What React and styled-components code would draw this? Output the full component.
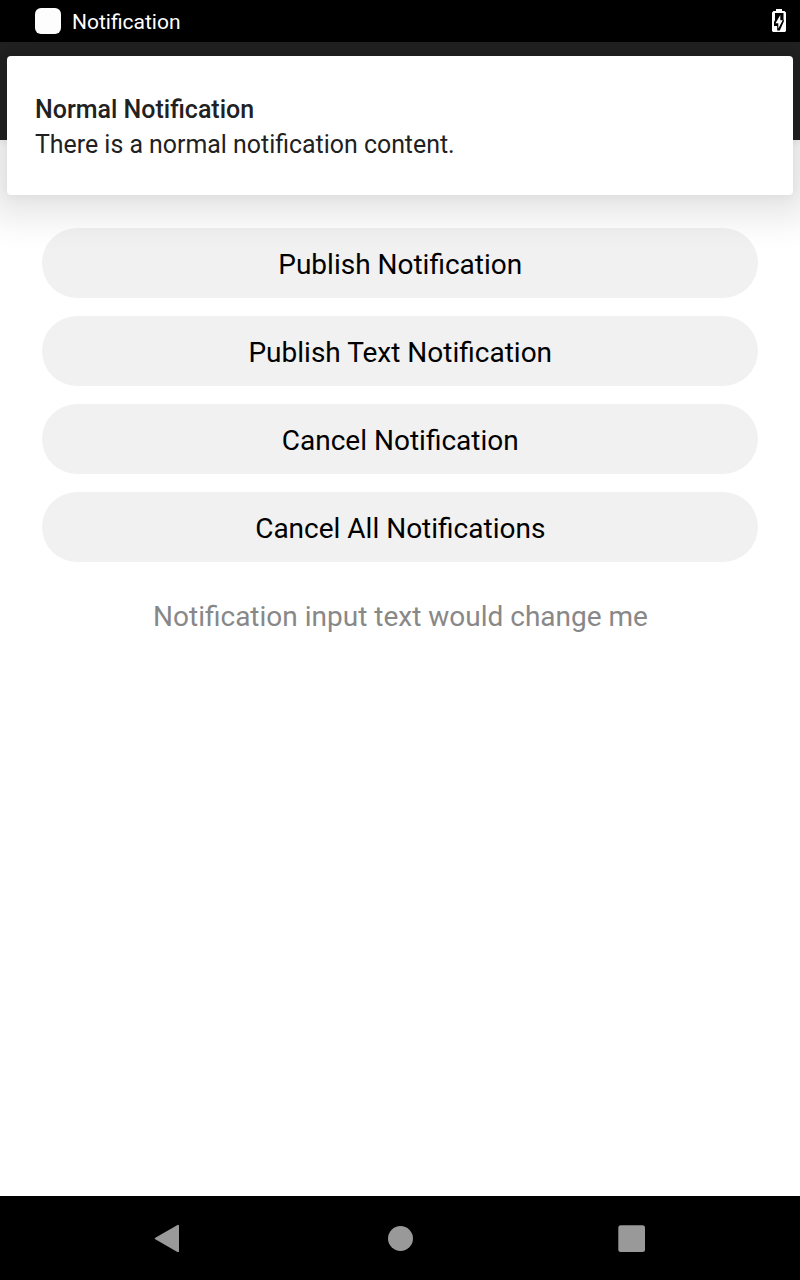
import React from 'react';
import styled, { createGlobalStyle } from 'styled-components';

const Global = createGlobalStyle`
  * { box-sizing: border-box; }
  body { margin: 0; font-family: Roboto, sans-serif; background: #fff; }
`;

const Screen = styled.div`
  position: relative;
  width: 800px;
  height: 1280px;
  display: flex;
  flex-direction: column;
  overflow: hidden;
  background: #fff;
`;

const StatusBar = styled.header`
  position: relative;
  z-index: 2;
  height: 42px;
  flex: none;
  display: flex;
  align-items: center;
  padding: 0 14px 0 35px;
  background: #000;
  color: #fff;
  font-size: 21px;
`;

const AppBadge = styled.span`
  width: 26px;
  height: 26px;
  margin-right: 11px;
  border-radius: 6px;
  background: #fdfdfd;
`;

const StatusTitle = styled.span`
  flex: 1;
  padding-top: 2px;
  line-height: 40px;
`;

const AppBar = styled.div`
  height: 98px;
  flex: none;
  background: #222;
  box-shadow: 0 2px 8px rgba(0, 0, 0, 0.08);
`;

const Content = styled.main`
  flex: 1;
  display: flex;
  flex-direction: column;
  gap: 18px;
  padding: 88px 42px 0;
`;

const PillButton = styled.button`
  height: 70px;
  flex: none;
  border: 0;
  border-radius: 35px;
  padding: 2px 0 0 0.5px;
  background: #f1f1f1;
  color: #000;
  font: 400 28px Roboto, sans-serif;
`;

const Hint = styled.p`
  margin: 0;
  padding-left: 1px;
  line-height: 73px;
  text-align: center;
  font-size: 28px;
  color: #888;
`;

const HeadsUp = styled.section`
  position: absolute;
  z-index: 1;
  top: 56px;
  left: 7px;
  right: 7px;
  height: 139px;
  padding: 36px 28px 0;
  border-radius: 4px;
  background: #fff;
  color: #212121;
  font-size: 24.9px;
  line-height: 35px;
  box-shadow: 0 2px 36px 20px rgba(0, 0, 0, 0.1), 0 2px 12px rgba(0, 0, 0, 0.05);
`;

const HeadsUpTitle = styled.div`
  font-size: 25px;
  font-weight: 500;
`;

const NavBar = styled.nav`
  height: 84px;
  flex: none;
  display: flex;
  align-items: center;
  justify-content: space-between;
  padding: 0 154px;
  background: #000;
`;

const NavIcon = styled.svg`
  width: 28px;
  height: 28px;
  fill: #999;
`;

const BatteryIcon = styled.svg`
  width: 14px;
  height: 24px;
`;

export default function App() {
  return (
    <Screen>
      <Global />
      <StatusBar>
        <AppBadge />
        <StatusTitle>Notification</StatusTitle>
        <BatteryIcon viewBox="0 0 14 24">
          <path fill="#fff" d="M4 0h6v2H12.500L14 3.500V22L13 23H1L0 22V3.500L1.500 2H4z" />
          <path fill="#000" d="M3 4H11.500V10.500L12 12L7.800 21.500H5.200V17H2V13L3 11z" />
          <path fill="#fff" d="M8.300 6L3.500 14.200H6.300V19.500L10.700 11.300H8.300z" />
        </BatteryIcon>
      </StatusBar>
      <AppBar />
      <Content>
        <PillButton>Publish Notification</PillButton>
        <PillButton>Publish Text Notification</PillButton>
        <PillButton>Cancel Notification</PillButton>
        <PillButton>Cancel All Notifications</PillButton>
        <Hint>Notification input text would change me</Hint>
      </Content>
      <NavBar>
        <NavIcon viewBox="0 0 28 28">
          <path d="M1.800 14.500L24 1.800V27.200Z" stroke="#999" strokeWidth="2" strokeLinejoin="round" />
        </NavIcon>
        <NavIcon viewBox="0 0 28 28">
          <circle cx="14.500" cy="14.500" r="12.500" />
        </NavIcon>
        <NavIcon viewBox="0 0 28 28">
          <rect x="0.300" y="1.200" width="26.700" height="26.700" rx="2.500" />
        </NavIcon>
      </NavBar>
      <HeadsUp>
        <HeadsUpTitle>Normal Notification</HeadsUpTitle>
        <div>There is a normal notification content.</div>
      </HeadsUp>
    </Screen>
  );
}
